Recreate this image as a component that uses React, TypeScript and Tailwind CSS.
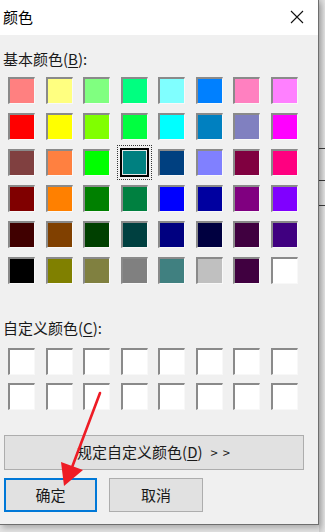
import React from "react";

const basic = [
  ["#ff8080", "#ffff80", "#80ff80", "#00ff80", "#80ffff", "#0080ff", "#ff80c0", "#ff80ff"],
  ["#ff0000", "#ffff00", "#80ff00", "#00ff40", "#00ffff", "#0080c0", "#8080c0", "#ff00ff"],
  ["#804040", "#ff8040", "#00ff00", "#008080", "#004080", "#8080ff", "#800040", "#ff0080"],
  ["#800000", "#ff8000", "#008000", "#008040", "#0000ff", "#0000a0", "#800080", "#8000ff"],
  ["#400000", "#804000", "#004000", "#004040", "#000080", "#000040", "#400040", "#400080"],
  ["#000000", "#808000", "#808040", "#808080", "#408080", "#c0c0c0", "#400040", "#ffffff"],
];

const font = { fontFamily: '"Noto Sans CJK SC", "Microsoft YaHei", sans-serif' };

function Swatch({ color, selected }: { color: string; selected?: boolean }) {
  if (selected) {
    return (
      <div className="relative w-[27px] h-[27px]">
        <div className="absolute -inset-[4px] border border-dotted border-[#333]" />
        <div className="absolute -inset-[1px] border-2 border-black p-[1px] bg-[#e8e8e8]">
          <div className="w-full h-full" style={{ backgroundColor: color }} />
        </div>
      </div>
    );
  }
  return (
    <div className="w-[27px] h-[27px] border-t-2 border-l-2 border-r border-b border-t-[#8a8a8a] border-l-[#8a8a8a] border-r-[#f8f8f8] border-b-[#f8f8f8]">
      <div className="w-full h-full" style={{ backgroundColor: color }} />
    </div>
  );
}

function Label({ text, hot }: { text: string; hot: string }) {
  return (
    <div className="h-[20px] leading-[20px] text-[15px] text-[#1a1a1a] pl-[3px]">
      {text}(<span className="underline underline-offset-2">{hot}</span>):
    </div>
  );
}

export default function App() {
  return (
    <div className="relative w-[325px] h-[532px] overflow-hidden bg-[#e4e4e4] flex" style={font}>
      <div className="w-[319px] h-[525px] flex flex-col bg-[#f0f0f0] border-r border-b border-[#6e6e6e] shadow-[2px_3px_6px_rgba(0,0,0,0.25)] z-10">
        {/* title bar */}
        <div className="h-[35px] bg-white flex items-center justify-between pl-[3px] pr-[14px]">
          <span className="text-[15px] text-black">颜色</span>
          <svg width="14" height="14" viewBox="0 0 14 14" className="mt-[-2px]">
            <path d="M1 1 L13 13 M13 1 L1 13" stroke="#111" strokeWidth="1.1" />
          </svg>
        </div>

        <div className="mt-[14px]">
          <Label text="基本颜色" hot="B" />
        </div>
        <div className="mt-[8px] pl-[8px] grid grid-cols-[repeat(8,27px)] gap-x-[10.5px] gap-y-[9px]">
          {basic.flatMap((row, r) =>
            row.map((c, i) => <Swatch key={`${r}-${i}`} color={c} selected={r === 2 && i === 3} />)
          )}
        </div>

        <div className="mt-[34px]">
          <Label text="自定义颜色" hot="C" />
        </div>
        <div className="mt-[10px] pl-[8px] grid grid-cols-[repeat(8,27px)] gap-x-[10.5px] gap-y-[8px]">
          {Array.from({ length: 16 }).map((_, i) => (
            <Swatch key={i} color="#ffffff" />
          ))}
        </div>

        <div className="mt-[25px] px-[4px]">
          <div className="h-[35px] w-[300px] bg-[#e1e1e1] border border-[#adadad] flex items-center justify-center text-[15px] text-[#1a1a1a]">
            规定自定义颜色(<span className="underline underline-offset-2">D</span>)<span className="ml-[8px] text-[13px] tracking-[1px]">&gt; &gt;</span>
          </div>
        </div>

        <div className="mt-[8px] px-[4px] flex gap-[12px]">
          <div className="w-[93px] h-[34px] bg-[#e1e1e1] border-2 border-[#0078d7] flex items-center justify-center text-[15px] text-[#1a1a1a]">
            确定
          </div>
          <div className="w-[94px] h-[34px] bg-[#e1e1e1] border border-[#adadad] flex items-center justify-center text-[15px] text-[#1a1a1a]">
            取消
          </div>
        </div>
      </div>

      {/* window behind, right edge */}
      <div className="flex-1 flex flex-col bg-gradient-to-r from-[#cfcfcf] to-[#e2e2e2]">
        <div className="h-[148px]" />
        <div className="h-[32px] border-t border-[#3a3a3a]" />
        <div className="h-[25px] border-t border-[#3a3a3a]" />
        <div className="flex-1 border-t border-[#3a3a3a]" />
      </div>

      {/* red annotation arrow */}
      <svg className="absolute left-0 top-0 z-20 pointer-events-none" width="325" height="532">
        <line x1="100" y1="393" x2="71" y2="470" stroke="#ee1c25" strokeWidth="2.6" strokeLinecap="round" />
        <polygon points="64,486 61,462 83,470" fill="#ee1c25" />
      </svg>
    </div>
  );
}
